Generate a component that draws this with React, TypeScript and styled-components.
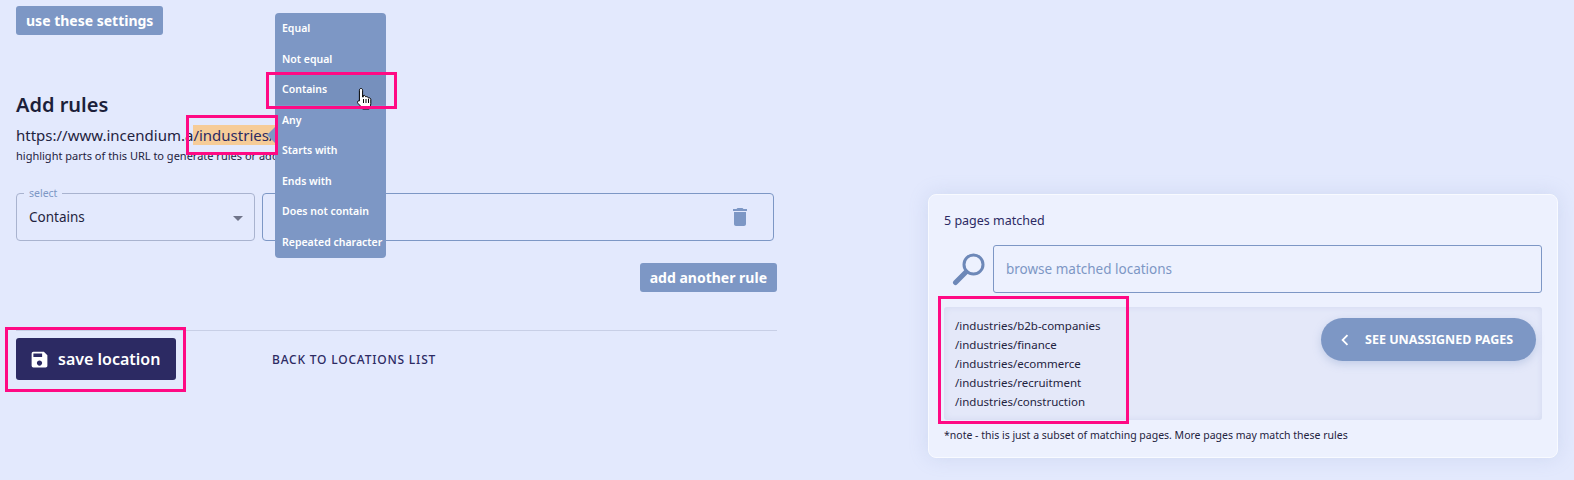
import styled, { createGlobalStyle } from "styled-components";
import { MdDelete, MdSave, MdChevronLeft } from "react-icons/md";

const blue = "#7d97c5";
const navy = "#2c2a63";
const pink = "#ff0a84";

const ruleTypes = [
  "Equal",
  "Not equal",
  "Contains",
  "Any",
  "Starts with",
  "Ends with",
  "Does not contain",
  "Repeated character",
];

const matchedPages = [
  "/industries/b2b-companies",
  "/industries/finance",
  "/industries/ecommerce",
  "/industries/recruitment",
  "/industries/construction",
];

export default function App() {
  return (
    <Page>
      <GlobalStyle />
      <LeftColumn>
        <SmallButton>use these settings</SmallButton>
        <Heading>Add rules</Heading>
        <UrlLine>
          https://www.incendium.a<Highlight>/industries/</Highlight>r
        </UrlLine>
        <Hint>highlight parts of this URL to generate rules or add</Hint>

        <RuleRow>
          <SelectBox>
            <SelectLabel>select</SelectLabel>
            Contains
            <Caret />
          </SelectBox>
          <ValueBox>
            <MdDelete size={24} />
          </ValueBox>
        </RuleRow>

        <AddRow>
          <SmallButton>add another rule</SmallButton>
        </AddRow>

        <Footer>
          <SaveButton>
            <MdSave size={21} />
            save location
          </SaveButton>
          <BackLink>BACK TO LOCATIONS LIST</BackLink>
        </Footer>
      </LeftColumn>

      <Card>
        <Matched>5 pages matched</Matched>
        <SearchRow>
          <svg width="34" height="34" viewBox="0 0 34 34" fill="none">
            <circle cx="21.5" cy="12.5" r="9.5" stroke="#6d88b8" strokeWidth="3" />
            <path d="M14 20 L3.5 30.5" stroke="#6d88b8" strokeWidth="5" strokeLinecap="round" />
          </svg>
          <SearchInput>browse matched locations</SearchInput>
        </SearchRow>
        <ListPanel>
          <PageList>
            {matchedPages.map((page) => (
              <li key={page}>{page}</li>
            ))}
          </PageList>
          <PillButton>
            <MdChevronLeft size={22} />
            SEE UNASSIGNED PAGES
          </PillButton>
        </ListPanel>
        <Note>*note - this is just a subset of matching pages. More pages may match these rules</Note>
      </Card>

      <TooltipArrow />
      <Menu>
        {ruleTypes.map((type) => (
          <MenuItem key={type} $hover={type === "Contains"}>
            {type}
          </MenuItem>
        ))}
      </Menu>

      <Cursor width="18" height="24" viewBox="0 0 18 24">
        <path
          d="M5 1.5c1 0 1.6.7 1.6 1.7V10l.6.1V8.6c1.4-.6 2.2 0 2.3 1l.4.2c1.2-.6 2.1 0 2.2 1l.4.2c1.2-.4 2.2.2 2.3 1.3v4.4c0 2.2-1.2 3.4-1.6 5.3H6.6C5.8 20 4 18.600 2 16.400c-1-1.200-.6-2.600 1-2.600l.4.1V3.200c0-1 .6-1.700 1.600-1.700z"
          fill="#fff"
          stroke="#000"
          strokeWidth="1"
        />
        <path d="M7.500 12v4M10 12v4M12.500 12v4" stroke="#000" strokeWidth="1" />
      </Cursor>

      <Marker $left={5} $top={327} $width={181} $height={65} />
      <Marker $left={938} $top={296} $width={191} $height={128} />
      <Marker $left={186} $top={115} $width={92} $height={40} />
      <Marker $left={266} $top={72} $width={131} $height={37} />
    </Page>
  );
}

const GlobalStyle = createGlobalStyle`
  html, body {
    margin: 0;
    padding: 0;
    background: #e3e9fd;
  }

  * {
    box-sizing: border-box;
  }
`;

const Page = styled.div`
  position: relative;
  height: 480px;
  overflow: hidden;
  padding: 6px 16px 0;
  display: flex;
  justify-content: space-between;
  align-items: flex-start;
  font-family: "Noto Sans", "Liberation Sans", sans-serif;
  color: #1f2340;
`;

const LeftColumn = styled.div`
  width: 761px;
  display: flex;
  flex-direction: column;
  align-items: flex-start;
`;

const SmallButton = styled.div`
  height: 29px;
  padding: 0 10px;
  display: flex;
  align-items: center;
  background: ${blue};
  border-radius: 3px;
  color: #fff;
  font-size: 14px;
  font-weight: 700;
  white-space: nowrap;
`;

const Heading = styled.h2`
  margin: 56px 0 0;
  font-size: 20px;
  line-height: 28px;
  font-weight: 600;
  color: #1c1f3a;
`;

const UrlLine = styled.div`
  margin-top: 5px;
  font-size: 15px;
  line-height: 22px;
  white-space: nowrap;
`;

const Highlight = styled.span`
  background: #f6cc98;
  color: ${navy};
`;

const Hint = styled.div`
  margin-top: 2px;
  font-size: 11px;
  line-height: 16px;
  white-space: nowrap;
`;

const RuleRow = styled.div`
  margin-top: 29px;
  width: 100%;
  display: flex;
  gap: 7px;
`;

const SelectBox = styled.div`
  position: relative;
  width: 239px;
  height: 48px;
  padding-left: 12px;
  display: flex;
  align-items: center;
  border: 1px solid #a9b3cf;
  border-radius: 4px;
  font-size: 13.5px;
`;

const SelectLabel = styled.span`
  position: absolute;
  top: -8px;
  left: 7px;
  padding: 0 5px;
  background: #e3e9fd;
  color: ${blue};
  font-size: 10.5px;
  line-height: 14px;
`;

const Caret = styled.span`
  position: absolute;
  right: 11px;
  top: 22px;
  border-left: 5px solid transparent;
  border-right: 5px solid transparent;
  border-top: 5px solid #70758a;
`;

const ValueBox = styled.div`
  flex: 1;
  height: 48px;
  margin-right: 3px;
  padding-right: 21px;
  display: flex;
  align-items: center;
  justify-content: flex-end;
  border: 1px solid ${blue};
  border-radius: 4px;
  color: ${blue};
`;

const AddRow = styled.div`
  margin-top: 22px;
  width: 100%;
  display: flex;
  justify-content: flex-end;
`;

const Footer = styled.div`
  margin-top: 38px;
  width: 100%;
  padding-top: 7px;
  display: flex;
  align-items: center;
  border-top: 1px solid #c8cfe6;
`;

const SaveButton = styled.div`
  width: 160px;
  height: 42px;
  padding-left: 13px;
  display: flex;
  align-items: center;
  gap: 8px;
  background: ${navy};
  border-radius: 3px;
  color: #fff;
  font-size: 16px;
  font-weight: 600;
`;

const BackLink = styled.div`
  margin-left: 96px;
  color: ${navy};
  font-size: 12px;
  letter-spacing: 0.8px;
  font-weight: 500;
`;

const Card = styled.div`
  width: 630px;
  height: 264px;
  margin: 188px 0 0;
  padding: 17px 15px 0;
  background: #edf1fe;
  border: 1px solid #f8faff;
  border-radius: 8px;
  box-shadow: 0 0 20px rgba(125, 151, 197, 0.2);
  color: ${navy};
`;

const Matched = styled.div`
  font-size: 12.5px;
  line-height: 18px;
`;

const SearchRow = styled.div`
  margin-top: 15px;
  display: flex;
  align-items: center;
  gap: 7px;
  padding-left: 8px;
`;

const SearchInput = styled.div`
  flex: 1;
  height: 48px;
  padding-left: 12px;
  display: flex;
  align-items: center;
  border: 1px solid ${blue};
  border-radius: 3px;
  color: ${blue};
  font-size: 13.5px;
`;

const ListPanel = styled.div`
  margin-top: 14px;
  height: 113px;
  padding: 9px 6px 0 11px;
  display: flex;
  justify-content: space-between;
  align-items: flex-start;
  background: #e4e8f9;
  border-radius: 3px;
  box-shadow: inset 0 0 6px rgba(125, 151, 197, 0.18);
`;

const PageList = styled.ul`
  margin: 0;
  padding: 0;
  list-style: none;
  font-size: 11.5px;
  line-height: 19px;
  color: #1f2340;
`;

const PillButton = styled.div`
  width: 215px;
  height: 43px;
  margin-top: 2px;
  padding-left: 13px;
  display: flex;
  align-items: center;
  gap: 9px;
  background: ${blue};
  border-radius: 22px;
  box-shadow: 0 3px 8px rgba(125, 151, 197, 0.35);
  color: #fff;
  font-size: 12.5px;
  font-weight: 700;
  white-space: nowrap;
`;

const Note = styled.div`
  margin-top: 7px;
  font-size: 10.5px;
  line-height: 16px;
  color: #1f2340;
`;

const TooltipArrow = styled.div`
  position: absolute;
  left: 267px;
  top: 127px;
  border-top: 8px solid transparent;
  border-bottom: 8px solid transparent;
  border-right: 8px solid ${blue};
`;

const Menu = styled.div`
  position: absolute;
  left: 275px;
  top: 13px;
  width: 111px;
  height: 245px;
  padding-top: 0;
  display: flex;
  flex-direction: column;
  background: ${blue};
  border-radius: 4px;
`;

const MenuItem = styled.div<{ $hover?: boolean }>`
  height: 30.500px;
  padding-left: 7px;
  display: flex;
  align-items: center;
  background: ${(p) => (p.$hover ? "#7690bd" : "transparent")};
  color: #fff;
  font-size: 10.5px;
  font-weight: 600;
  white-space: nowrap;
`;

const Cursor = styled.svg`
  position: absolute;
  left: 356px;
  top: 87px;
`;

const Marker = styled.div<{ $left: number; $top: number; $width: number; $height: number }>`
  position: absolute;
  left: ${(p) => p.$left}px;
  top: ${(p) => p.$top}px;
  width: ${(p) => p.$width}px;
  height: ${(p) => p.$height}px;
  border: 3px solid ${pink};
  pointer-events: none;
`;
